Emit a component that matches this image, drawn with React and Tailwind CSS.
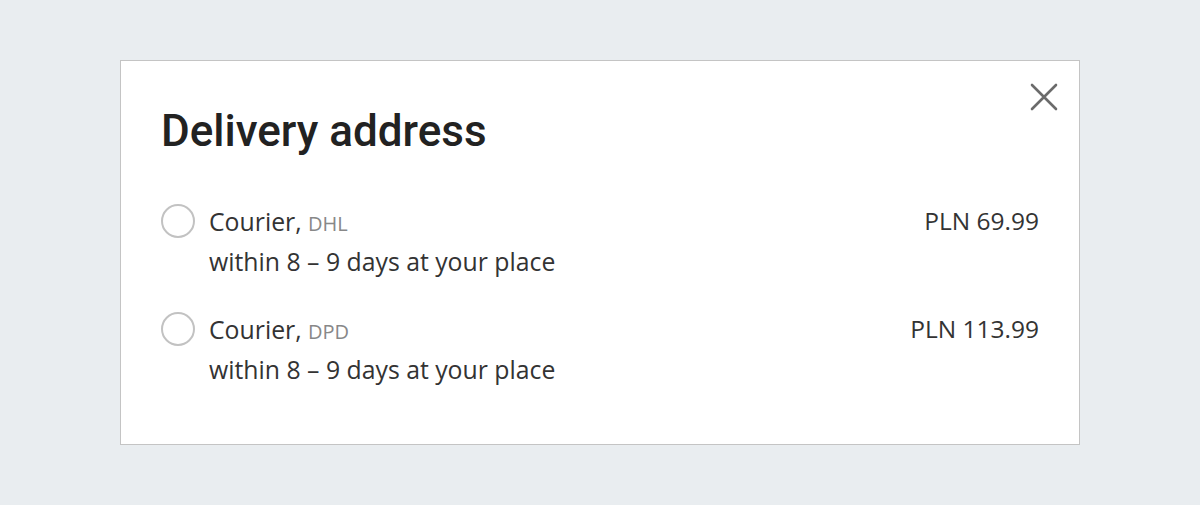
const options = [
  { carrier: 'DHL', price: 'PLN 69.99' },
  { carrier: 'DPD', price: 'PLN 113.99' },
];

export default function App() {
  return (
    <div className="w-[1200px] h-[505px] bg-[#e9edf0] flex items-start justify-center pt-[60px]">
      <div className="relative w-[960px] h-[385px] bg-white border border-[#c4c4c4] px-[40px] pt-[44px]">
        <button className="absolute right-[18px] top-[19px] w-[34px] h-[34px] flex items-center justify-center text-[#6b6b6b]">
          <svg width="28" height="28" viewBox="0 0 28 28" fill="none" stroke="currentColor" strokeWidth="2.6" strokeLinecap="round">
            <path d="M2 2L26 26M26 2L2 26" />
          </svg>
        </button>
        <h2 className="font-['Roboto',sans-serif] font-medium text-[44px] leading-[52px] text-[#222]">
          Delivery address
        </h2>
        <div className="mt-[44px] flex flex-col gap-[28px] font-['Open_Sans',sans-serif] text-[#333]">
          {options.map((o) => (
            <div key={o.carrier} className="flex items-start">
              <span className="mt-[3px] w-[34px] h-[34px] rounded-full border-2 border-[#c2c2c2] shrink-0" />
              <div className="ml-[14px] flex-1">
                <div className="h-[40px] text-[24.8px] leading-[40px]">
                  Courier, <span className="text-[20px] leading-none text-[#888]">{o.carrier}</span>
                </div>
                <div className="h-[40px] text-[24.8px] leading-[40px]">within 8 – 9 days at your place</div>
              </div>
              <div className="text-[24.5px] leading-[40px] text-[#333]">{o.price}</div>
            </div>
          ))}
        </div>
      </div>
    </div>
  );
}
